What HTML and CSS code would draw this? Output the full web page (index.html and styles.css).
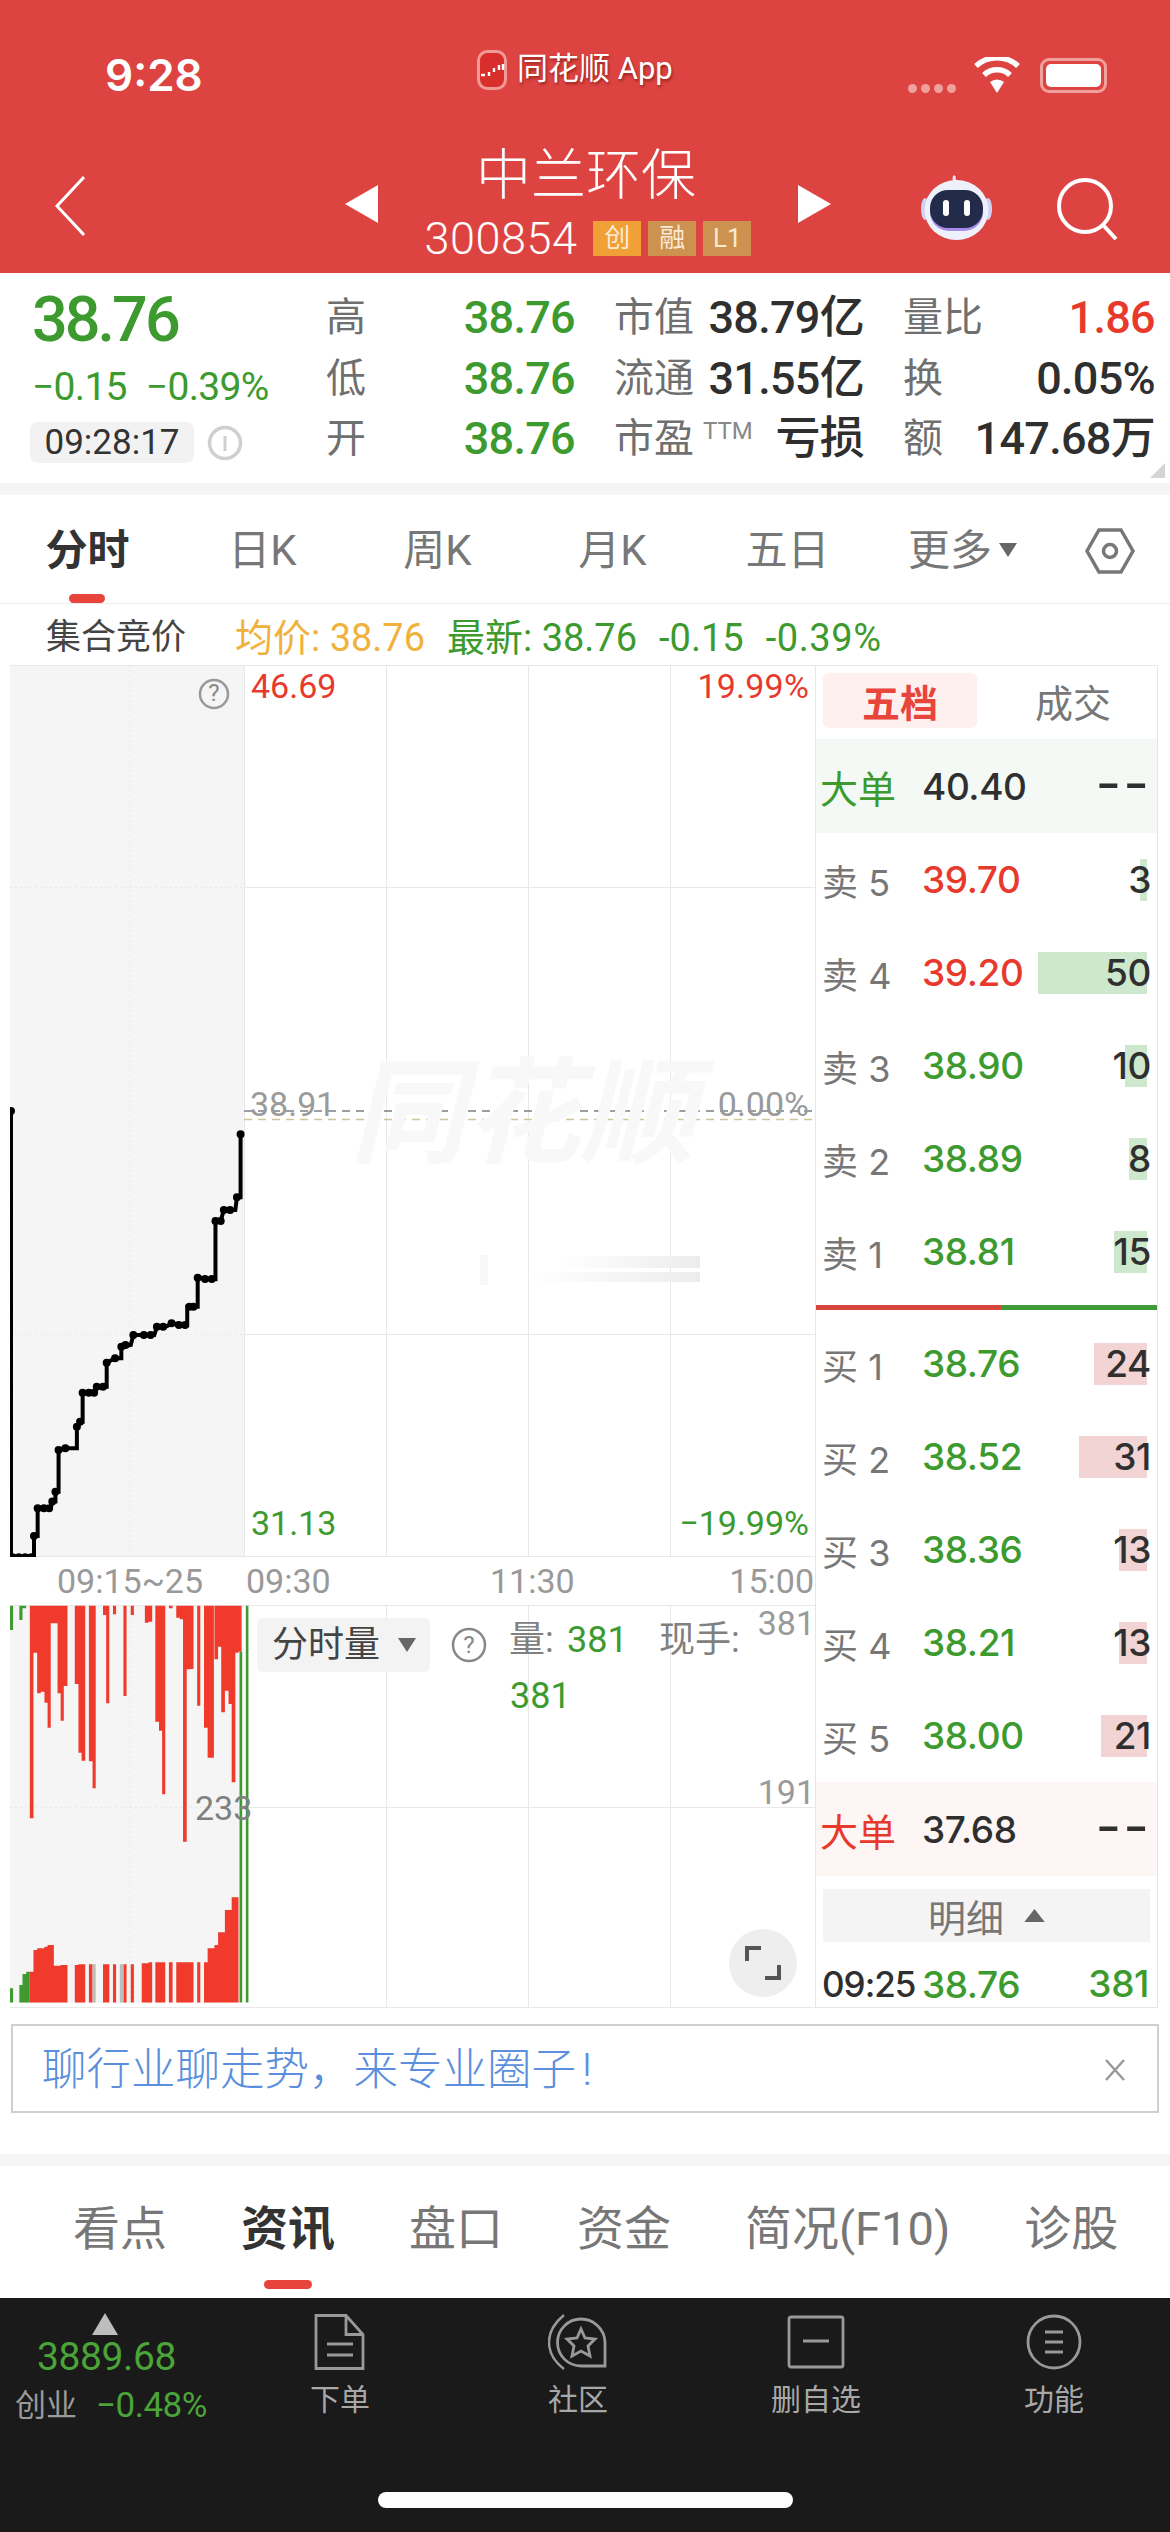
FILE: index.html
```html
<!DOCTYPE html>
<html lang="zh-CN">
<head>
<meta charset="utf-8">
<title>中兰环保</title>
<link rel="stylesheet" href="styles.css">
</head>
<body>
<div class="page">
  <header class="head">
    <div class="status">
      <span class="clock">9:28</span>
      <div class="appname">
        <svg class="applogo" viewBox="0 0 30 40"><rect x="1.5" y="1.5" width="27" height="37" rx="9" fill="#d92f2c" stroke="#f09a96" stroke-width="3"/><path d="M4 25h4M12 22v4M17 18v4M22 15v5M26 14v6" stroke="#fff" stroke-width="2.4"/></svg>
        <span>同花顺 App</span>
      </div>
      <div class="sysicons">
        <div class="dots"><i></i><i></i><i></i><i></i></div>
        <svg class="wifi" viewBox="0 0 48 36"><path d="M24 36l-7-11a11 11 0 0 1 14 0z" fill="#fff"/><path d="M11 18a19 19 0 0 1 26 0M3 9a31 31 0 0 1 42 0" fill="none" stroke="#fff" stroke-width="5.5"/></svg>
        <div class="battery"><div class="battery-fill"></div></div>
      </div>
    </div>
    <div class="nav">
      <svg class="back" viewBox="0 0 30 60"><path d="M29 1L2 30l27 29" fill="none" stroke="#fff" stroke-width="3"/></svg>
      <svg class="tri" viewBox="0 0 33 38"><path d="M33 0v38L0 19z" fill="#fff"/></svg>
      <div class="title">
        <div class="name">中兰环保</div>
        <div class="code"><span>300854</span><b class="tag tag-a">创</b><b class="tag">融</b><b class="tag">L1</b></div>
      </div>
      <svg class="tri" viewBox="0 0 33 38"><path d="M0 0v38l33-19z" fill="#fff"/></svg>
      <svg class="robot" viewBox="0 0 73 68">
        <path d="M36 9c-2-2-3-4-1-6" fill="none" stroke="#e9e6f8" stroke-width="3"/>
        <ellipse cx="5" cy="36" rx="4" ry="11" fill="#cfd3f2"/><ellipse cx="68" cy="36" rx="4" ry="11" fill="#cfd3f2"/>
        <ellipse cx="36.500" cy="37" rx="32" ry="30" fill="#eef0fb"/>
        <rect x="10" y="18" width="53" height="40" rx="19" fill="#a78be8"/>
        <rect x="10" y="17" width="53" height="38" rx="18" fill="#222b4a"/>
        <rect x="23" y="27" width="6" height="16" rx="3" fill="#fff"/><rect x="44" y="27" width="6" height="16" rx="3" fill="#fff"/>
      </svg>
      <svg class="search" viewBox="0 0 62 62"><circle cx="29" cy="28" r="26" fill="none" stroke="#fff" stroke-width="4"/><path d="M48 48l12 13" stroke="#fff" stroke-width="4"/></svg>
    </div>
  </header>

  <section class="quote">
    <div class="price-col">
      <div class="price">38.76</div>
      <div class="change"><span>−0.15</span><span>−0.39%</span></div>
      <div class="timerow">
        <span class="time">09:28:17</span>
        <svg class="info" viewBox="0 0 36 36"><circle cx="18" cy="18" r="15.500" fill="none" stroke="#cfcfcf" stroke-width="3.500"/><path d="M18 11v15" stroke="#cfcfcf" stroke-width="3"/></svg>
      </div>
    </div>
    <div class="stats">
      <div class="stat"><span class="lab">高</span><span class="val up-g">38.76</span></div>
      <div class="stat"><span class="lab">市值</span><span class="val dark">38.79亿</span></div>
      <div class="stat"><span class="lab">量比</span><span class="val red">1.86</span></div>
      <div class="stat"><span class="lab">低</span><span class="val up-g">38.76</span></div>
      <div class="stat"><span class="lab">流通</span><span class="val dark">31.55亿</span></div>
      <div class="stat"><span class="lab">换</span><span class="val dark">0.05%</span></div>
      <div class="stat"><span class="lab">开</span><span class="val up-g">38.76</span></div>
      <div class="stat"><span class="lab">市盈<small>TTM</small></span><span class="val dark">亏损</span></div>
      <div class="stat"><span class="lab">额</span><span class="val dark">147.68万</span></div>
    </div>
    <svg class="corner" viewBox="0 0 15 15"><path d="M15 0v15H0z" fill="#d4d4d4"/></svg>
  </section>
  <div class="band"></div>

  <nav class="tabs">
    <a class="tab on">分时</a><a class="tab">日K</a><a class="tab">周K</a><a class="tab">月K</a><a class="tab">五日</a>
    <a class="tab">更多<svg class="caret" viewBox="0 0 18 14"><path d="M0 0h18L9 14z" fill="#666"/></svg></a>
    <a class="tab"><svg class="hex" viewBox="0 0 50 46"><path d="M14 2h22l12 21-12 21H14L2 23z" fill="none" stroke="#777" stroke-width="3.500"/><circle cx="25" cy="23" r="6.500" fill="none" stroke="#777" stroke-width="3.500"/></svg></a>
  </nav>

  <div class="inforow">
    <span class="auction">集合竞价</span>
    <span class="avg">均价: 38.76</span>
    <span class="latest">最新: 38.76</span>
    <span class="latest">-0.15</span>
    <span class="latest">-0.39%</span>
  </div>

  <section class="market">
    <div class="chart">
      <div class="plot plot-price">
        <svg class="canvas" viewBox="10 665 805 892">
          <rect x="10" y="665" width="234" height="892" fill="#f5f5f5"/>
          <path d="M10 665.500H815M244 887.500H815M244 1334.500H815M10 1556.500H815M386.500 665V1557M528.500 665V1557M670.500 665V1557M244.500 665V1557" stroke="#e8e8e8" fill="none"/>
          <path d="M10 887.500H244M10 1334.500H244M129.500 665V1557" stroke="#e8e8e8" stroke-dasharray="2 3" fill="none"/>
          <path d="M244 1111H815" stroke="#7b7f86" stroke-width="1.500" stroke-dasharray="8 6"/>
          <path d="M244 1119.500H815" stroke="#cfc597" stroke-width="1.500" stroke-dasharray="8 6"/>
          <defs><linearGradient id="smear"><stop offset="0" stop-color="#fff"/><stop offset="1" stop-color="#ececec"/></linearGradient></defs>
          <rect x="560" y="1256" width="140" height="12" fill="url(#smear)"/>
          <rect x="530" y="1272" width="170" height="10" fill="url(#smear)"/>
          <rect x="480" y="1255" width="8" height="30" fill="#f8f8f8"/>
          <g transform="translate(0 1080) scale(.523 .3333)">
            <path class="line" d="M21 93V1432H65V1368H72V1285H97L100 1265H106V1235H112V1110L125 1105H147V1040L153 1025H158V938H180L185 920H204V848L220 835H232V800L250 795L255 765H295L300 740L320 738L328 730L358 735V680H378V593L412 597V423H422L428 390H450L453 352H460V163"/>
            <path class="dot" d="M21 93h0M24 1432h0M36 1432h0M48 1432h0M60 1432h0M65 1368h0M72 1285h0M84 1285h0M94 1285h0M100 1265h0M106 1235h0M112 1110h0M125 1105h0M147 1040h0M153 1025h0M158 938h0M170 938h0M180 938h0M185 920h0M197 920h0M204 848h0M220 835h0M232 800h0M240 795h0M255 765h0M275 765h0M288 765h0M300 740h0M312 740h0M328 730h0M342 735h0M354 735h0M362 680h0M370 680h0M378 593h0M392 597h0M405 597h0M412 423h0M422 423h0M428 390h0M440 390h0M453 352h0M460 163h0"/>
          </g>
        </svg>
        <span class="wm">同花顺</span>
        <svg class="help help-a" viewBox="0 0 32 32"><circle cx="16" cy="16" r="14" fill="none" stroke="#999" stroke-width="2.500"/><text x="16" y="23" text-anchor="middle" class="qm">?</text></svg>
        <span class="lbl l-top red">46.69</span>
        <span class="lbl r-top red">19.99%</span>
        <span class="lbl l-mid gray">38.91</span>
        <span class="lbl r-mid gray">0.00%</span>
        <span class="lbl l-bot up-g">31.13</span>
        <span class="lbl r-bot up-g">−19.99%</span>
      </div>
      <div class="axis">
        <span class="ax-a">09:15~25</span><span class="ax-b">09:30</span><span class="ax-c">11:30</span><span class="ax-d">15:00</span>
      </div>
      <div class="plot plot-vol">
        <svg class="canvas" viewBox="10 1605 805 403">
          <rect x="10" y="1606" width="234" height="397" fill="#f5f5f5"/>
          <path d="M10 1605.500H815M244 1807.500H815M10 2007.500H815M386.500 1605V2008M528.500 1605V2008M670.500 1605V2008" stroke="#e8e8e8" fill="none"/>
          <path d="M10 1807.500H244M129.500 1606V2003" stroke="#e8e8e8" stroke-dasharray="2 3" fill="none"/>
          <g transform="translate(0 1570) scale(.523 .3333)">
            <path fill="#ef3a2c" d="M57 107h7V745h-7zM64 107h7V248h-7zM71 107h7V370h-7zM78 107h7V365h-7zM85 107h6V398h-6zM91 107h6V473h-6zM97 107h7V160h-7zM104 107h6V160h-6zM110 107h6V370h-6zM116 107h6V452h-6zM122 107h7V348h-7zM143 107h7V342h-7zM150 107h6V548h-6zM156 107h7V572h-7zM170 107h7V574h-7zM177 107h6V655h-6zM197 107h6V135h-6zM203 107h6V400h-6zM216 107h6V133h-6zM236 107h6V378h-6zM250 107h6V135h-6zM277 107h7V158h-7zM284 107h7V155h-7zM297 107h7V455h-7zM304 107h6V482h-6zM310 107h6V673h-6zM323 107h7V115h-7zM337 107h7V143h-7zM344 107h6V148h-6zM350 107h7V815h-7zM357 107h7V298h-7zM364 107h6V297h-6zM377 107h6V407h-6zM390 107h7V473h-7zM397 107h6V563h-6zM403 107h6V563h-6zM410 107h7V268h-7zM417 107h6V230h-6zM423 107h7V427h-7zM430 107h7V362h-7zM437 107h6V402h-6zM443 107h7V637h-7zM450 107h6V248h-6zM456 107h6V245h-6z"/>
            <path fill="#ef3a2c" d="M57 1205h7V1298h-7zM64 1140h7V1298h-7zM71 1135h7V1298h-7zM78 1135h7V1298h-7zM85 1130h6V1298h-6zM91 1125h12V1298h-12zM103 1187h7V1298h-7zM110 1187h6V1298h-6zM116 1185h6V1298h-6zM122 1185h7V1298h-7zM143 1185h7V1298h-7zM150 1183h13V1298h-13zM170 1183h7V1298h-7zM197 1183h12V1298h-12zM216 1183h6V1298h-6zM236 1183h6V1298h-6zM250 1183h6V1298h-6zM271 1180h13V1298h-13zM284 1177h7V1298h-7zM297 1177h19V1298h-19zM323 1177h7V1298h-7zM337 1177h33V1298h-33zM377 1177h6V1298h-6zM390 1177h7V1298h-7zM397 1135h13V1298h-13zM410 1125h7V1298h-7zM417 1087h13V1298h-13zM430 1020h13V1298h-13zM443 982h13V1298h-13z"/>
            <path fill="#bdbdbd" d="M177 1183h6V1298h-6zM229 1183h7V1298h-7z"/>
            <path fill="#3f9b2f" d="M19 107h6V180h-6zM37 107h6V150h-6zM43 107h7V115h-7zM19 1255h6V1298h-6zM37 1245h6V1298h-6zM43 1212h7V1298h-7zM50 1205h7V1298h-7zM458 245h5V1298h-5zM470 107h5V1298h-5z"/>
          </g>
        </svg>
        <div class="vol-chip">分时量<svg class="chip-caret" viewBox="0 0 18 14"><path d="M0 0h18L9 14z" fill="#666"/></svg></div>
        <svg class="help help-b" viewBox="0 0 36 36"><circle cx="18" cy="18" r="16" fill="none" stroke="#888" stroke-width="2.500"/><text x="18" y="26" text-anchor="middle" class="qm">?</text></svg>
        <span class="lbl v-a gray2">量:</span>
        <span class="lbl v-b up-g">381</span>
        <span class="lbl v-c gray2">现手:</span>
        <span class="lbl v-d gray">381</span>
        <span class="lbl v-e up-g">381</span>
        <span class="lbl v-f gray">191</span>
        <span class="lbl v-g gray2">233</span>
        <div class="expand"><svg viewBox="0 0 36 36"><path d="M2 16V3h14M34 20v13H20" fill="none" stroke="#555" stroke-width="4"/></svg></div>
      </div>
    </div>

    <div class="book">
      <div class="book-tabs"><span class="bt on">五档</span><span class="bt">成交</span></div>
      <div class="big big-g"><span class="biglab up-g">大单</span><span class="px dark">40.40</span><span class="qty"><span class="nil">--</span></span></div>
      <div class="row"><span class="rl">卖 5</span><span class="px red">39.70</span><span class="qty"><i class="bar bar-g" style="width:7px"></i><span>3</span></span></div>
      <div class="row"><span class="rl">卖 4</span><span class="px red">39.20</span><span class="qty"><i class="bar bar-g" style="width:109px"></i><span>50</span></span></div>
      <div class="row"><span class="rl">卖 3</span><span class="px up-g">38.90</span><span class="qty"><i class="bar bar-g" style="width:22px"></i><span>10</span></span></div>
      <div class="row"><span class="rl">卖 2</span><span class="px up-g">38.89</span><span class="qty"><i class="bar bar-g" style="width:18px"></i><span>8</span></span></div>
      <div class="row"><span class="rl">卖 1</span><span class="px up-g">38.81</span><span class="qty"><i class="bar bar-g" style="width:33px"></i><span>15</span></span></div>
      <div class="split"><i class="s-r"></i><i class="s-g"></i></div>
      <div class="row"><span class="rl">买 1</span><span class="px up-g">38.76</span><span class="qty"><i class="bar bar-r" style="width:53px"></i><span>24</span></span></div>
      <div class="row"><span class="rl">买 2</span><span class="px up-g">38.52</span><span class="qty"><i class="bar bar-r" style="width:68px"></i><span>31</span></span></div>
      <div class="row"><span class="rl">买 3</span><span class="px up-g">38.36</span><span class="qty"><i class="bar bar-r" style="width:28px"></i><span>13</span></span></div>
      <div class="row"><span class="rl">买 4</span><span class="px up-g">38.21</span><span class="qty"><i class="bar bar-r" style="width:28px"></i><span>13</span></span></div>
      <div class="row"><span class="rl">买 5</span><span class="px up-g">38.00</span><span class="qty"><i class="bar bar-r" style="width:46px"></i><span>21</span></span></div>
      <div class="big big-r"><span class="biglab red">大单</span><span class="px dark">37.68</span><span class="qty"><span class="nil">--</span></span></div>
      <div class="detail">明细<svg class="up" viewBox="0 0 22 14"><path d="M0 14h22L11 0z" fill="#666"/></svg></div>
      <div class="last"><span class="lt dark">09:25</span><span class="px up-g">38.76</span><span class="qty up-g"><span>381</span></span></div>
    </div>
  </section>

  <div class="banner">
    <span>聊行业聊走势，来专业圈子<span class="bang">!</span></span>
    <svg class="close" viewBox="0 0 22 22"><path d="M2 1l18 20M20 1L2 21" stroke="#999" stroke-width="2.500"/></svg>
  </div>
  <div class="band band-2"></div>

  <nav class="tabs2">
    <a class="t2">看点</a><a class="t2 on">资讯</a><a class="t2">盘口</a><a class="t2">资金</a><a class="t2">简况(F10)</a><a class="t2">诊股</a>
  </nav>

  <footer class="dock">
    <div class="dock-row">
      <div class="index">
        <svg class="idx-tri" viewBox="0 0 26 22"><path d="M13 0l13 22H0z" fill="#bdbdbd"/></svg>
        <div class="idx-num">3889.68</div>
        <div class="idx-sub"><span class="idx-name">创业</span><span class="idx-pct">−0.48%</span></div>
      </div>
      <div class="dk">
        <svg viewBox="0 0 60 56"><path d="M6 1.500h30l17 19V54.500H6z M36 1.500V20.500H53" fill="none" stroke="#999" stroke-width="2.800"/><path d="M17 30h26M17 41h26" stroke="#999" stroke-width="3"/></svg>
        <span>下单</span>
      </div>
      <div class="dk">
        <svg viewBox="0 0 60 56"><path d="M16 1C4 11 1 20 1 28c0 9 3 18 15 27" fill="none" stroke="#999" stroke-width="2.500"/><path d="M33 5a23 23 0 1 0 0 47h24V28A24 24 0 0 0 33 5z" fill="none" stroke="#999" stroke-width="2.800"/><path d="M33 15l4 9 10 1-7 7 2 10-9-5-9 5 2-10-7-7 10-1z" fill="none" stroke="#999" stroke-width="2.800"/></svg>
        <span>社区</span>
      </div>
      <div class="dk">
        <svg viewBox="0 0 60 56"><rect x="3" y="3" width="54" height="50" rx="2" fill="none" stroke="#999" stroke-width="2.800"/><path d="M17 27h26" stroke="#999" stroke-width="3"/></svg>
        <span>删自选</span>
      </div>
      <div class="dk">
        <svg viewBox="0 0 60 56"><circle cx="30" cy="28" r="26" fill="none" stroke="#999" stroke-width="2.800"/><path d="M21 18h18M21 28h18M21 38h18" stroke="#999" stroke-width="3"/></svg>
        <span>功能</span>
      </div>
    </div>
    <div class="home"></div>
  </footer>
</div>
</body>
</html>
```
FILE: styles.css
```css
* { box-sizing: border-box; }
html, body { margin: 0; padding: 0; background: #fff; }
body { font-family: Roboto, "Noto Sans CJK SC", sans-serif; color: #333; }
.page { width: 1170px; height: 2532px; overflow: hidden; }
svg { display: block; }
a { display: block; }

.up-g { color: #3c9a2e; }
.red { color: #e8392d; }
.dark { color: #2f2f2f; }
.gray { color: #9a9a9a; }
.gray2 { color: #808080; }

/* Header */
.head { height: 273px; background: #dd4441; color: #fff; }
.status { height: 130px; display: flex; padding: 50px 0 0 105px; }
.clock { font-family: Inter, sans-serif; font-weight: 600; font-size: 44px; line-height: 50px; width: 372px; }
.appname { display: flex; align-items: flex-start; gap: 10px; width: 430px; }
.applogo { width: 30px; height: 40px; flex: none; }
.appname span { font-size: 31px; line-height: 38px; text-shadow: 1px 2px 3px rgba(90, 0, 0, .55); }
.sysicons { display: flex; align-items: flex-start; margin-left: 1px; }
.dots { display: flex; gap: 4px; margin: 34px 17px 0 0; }
.dots i { width: 9px; height: 9px; border-radius: 50%; background: #f0a09d; }
.wifi { width: 48px; height: 36px; margin: 7px 19px 0 0; }
.battery { width: 67px; height: 35px; margin-top: 8px; border: 3px solid #f0a09d; border-radius: 9px; padding: 3px; }
.battery-fill { width: 100%; height: 100%; background: #fff; border-radius: 5px; }

.nav { height: 143px; display: flex; align-items: flex-start; padding-left: 55px; }
.back { width: 30px; height: 60px; margin: 46px 260px 0 0; }
.tri { width: 33px; height: 38px; margin-top: 55px; flex: none; }
.title { width: 420px; text-align: center; }
.name { font-size: 55px; line-height: 70px; font-weight: 300; margin-top: 10px; margin-left: -4px; }
.code { display: flex; justify-content: center; align-items: center; gap: 7px; margin-top: 6px; height: 44px; }
.code span { font-size: 45px; font-weight: 300; margin-right: 9px; letter-spacing: .5px; }
.tag { width: 48px; height: 35px; background: #cd9150; color: #fbe9d2; font-weight: 400; font-size: 26px; line-height: 35px; text-align: center; }
.tag-a { background: #f0a036; }
.robot { width: 73px; height: 68px; margin: 43px 0 0 89px; }
.search { width: 62px; height: 62px; margin: 48px 0 0 63px; }

/* Quote */
.quote { height: 210px; display: flex; padding-top: 15px; position: relative; }
.price-col { width: 326px; padding-left: 32px; flex: none; }
.price { font-weight: 500; font-size: 63px; line-height: 60px; height: 60px; color: #3c9a2e; letter-spacing: -3px; margin-top: 2px; }
.change { display: flex; gap: 19px; font-size: 39px; line-height: 60px; margin-top: 7px; color: #3c9a2e; letter-spacing: -.7px; }
.timerow { display: flex; align-items: center; gap: 13px; margin-top: 5px; margin-left: -2px; }
.time { width: 164px; height: 41px; background: #f2f2f2; border-radius: 8px; text-align: center; font-size: 35px; line-height: 41px; color: #333; }
.info { width: 36px; height: 36px; }
.stats { display: grid; grid-template-columns: 249px 250px 252px; column-gap: 39px; grid-auto-rows: 60.5px; }
.stat { display: flex; justify-content: space-between; align-items: center; }
.lab { font-size: 40px; color: #6f6f6f; line-height: 50px; display: flex; }
.lab small { font-size: 24px; line-height: 34px; margin-left: 9px; color: #888; }
.val { font-size: 45px; font-weight: 500; line-height: 50px; letter-spacing: -.7px; }
.corner { position: absolute; right: 5px; bottom: 5px; width: 15px; height: 15px; }

.band { height: 12px; background: #f5f5f5; }

/* Tabs */
.tabs { height: 109px; display: grid; grid-template-columns: repeat(6, 175px) 120px; border-bottom: 1px solid #ececec; }
.tab { font-size: 42px; line-height: 50px; padding-top: 31px; color: #777; text-align: center; display: flex; justify-content: center; align-items: flex-start; position: relative; }
.tab.on { color: #333; font-weight: 700; }
.tab.on::after { content: ""; position: absolute; left: 69px; top: 99px; width: 36px; height: 9px; border-radius: 5px; background: #e8443c; }
.caret { width: 18px; height: 14px; margin: 17px 0 0 7px; }
.hex { width: 50px; height: 46px; margin-top: 2px; }

.inforow { height: 61px; display: flex; padding: 11px 0 0 46px; font-size: 38px; line-height: 46px; white-space: nowrap; }
.auction { width: 189px; color: #444; font-size: 35px; }
.avg { width: 212px; color: #f0b23c; }
.latest { color: #3c9a2e; margin-right: 22px; }
.latest:last-child { letter-spacing: .6px; }

/* Market */
.market { margin-left: 10px; width: 1148px; height: 1343px; display: flex; }
.chart { width: 805px; flex: none; }
.plot { position: relative; }
.plot-price { height: 892px; }
.plot-vol { height: 403px; }
.canvas { position: absolute; inset: 0; width: 100%; height: 100%; }
.line { fill: none; stroke: #000; stroke-width: 4; vector-effect: non-scaling-stroke; }
.dot { fill: none; stroke: #000; stroke-width: 8; stroke-linecap: round; vector-effect: non-scaling-stroke; }
.wm { position: absolute; left: 340px; top: 385px; font-size: 115px; line-height: 130px; font-weight: 700; color: #f8f8f8; font-style: italic; }
.lbl { position: absolute; font-size: 34px; line-height: 40px; white-space: nowrap; }
.help { position: absolute; }
.help-a { left: 188px; top: 13px; width: 32px; height: 32px; }
.help-b { left: 441px; top: 22px; width: 36px; height: 36px; }
.qm { font-size: 24px; fill: #888; font-family: Roboto, sans-serif; }
.l-top { left: 241px; top: 1px; }
.r-top { right: 6px; top: 1px; letter-spacing: .2px; }
.l-mid { left: 240px; top: 419px; }
.r-mid { right: 6px; top: 419px; }
.l-bot { left: 241px; top: 838px; }
.r-bot { right: 6px; top: 838px; }

.axis { height: 48px; position: relative; font-size: 34px; line-height: 48px; color: #999; }
.axis span { position: absolute; top: 0; }
.ax-a { left: 47px; }
.ax-b { left: 236px; }
.ax-c { left: 480px; }
.ax-d { right: 1px; }

.vol-chip { position: absolute; left: 247px; top: 13px; width: 173px; height: 54px; background: #f3f3f3; border-radius: 6px; font-size: 36px; line-height: 54px; padding-left: 15px; color: #444; display: flex; align-items: center; }
.chip-caret { width: 18px; height: 14px; margin-left: 18px; }
.v-a { left: 499px; top: 15px; font-size: 36px; }
.v-b { left: 557px; top: 15px; font-size: 36px; }
.v-c { left: 649px; top: 15px; font-size: 36px; }
.v-d { right: 0; top: -2px; }
.v-e { left: 500px; top: 71px; font-size: 36px; }
.v-f { right: 0; top: 167px; }
.v-g { left: 185px; top: 183px; }
.expand { position: absolute; left: 719px; top: 324px; width: 68px; height: 68px; border-radius: 50%; background: #eee; display: flex; align-items: center; justify-content: center; }
.expand svg { width: 36px; height: 36px; }

/* Order book */
.book { width: 343px; flex: none; border-left: 1px solid #e6e6e6; border-right: 1px solid #e6e6e6; border-bottom: 1px solid #e6e6e6; border-top: 1px solid #e9e9e9; font-family: Inter, "Noto Sans CJK SC", sans-serif; }
.book-tabs { height: 73px; display: flex; padding: 7px 0 0 7px; }
.bt { width: 154px; height: 55px; font-size: 38px; line-height: 55px; text-align: center; color: #777; font-family: "Noto Sans CJK SC", sans-serif; }
.bt + .bt { margin-left: 19px; }
.bt.on { background: #fdf0ee; color: #e8453c; border-radius: 6px; font-weight: 700; }
.big, .row, .last { display: flex; align-items: center; padding: 0 6px 0 6px; }
.big { height: 94px; }
.big-g { background: #f4f9f5; }
.big-r { background: #fdf6f5; height: 94px; }
.biglab { width: 102px; font-size: 38px; margin-left: -2px; font-family: "Noto Sans CJK SC", sans-serif; }
.row { height: 93px; }
.rl { width: 100px; font-size: 36px; color: #777; }
.px { font-size: 37px; font-weight: 500; width: 130px; letter-spacing: -.4px; }
.qty { flex: 1; text-align: right; position: relative; font-size: 37px; font-weight: 500; color: #2f2f2f; line-height: 42px; letter-spacing: -.4px; }
.qty span { position: relative; }
.qty .nil { font-size: 56px; letter-spacing: 2px; font-weight: 400; }
.bar { position: absolute; right: 4px; top: 0; height: 42px; }
.bar-g { background: #cde8cc; }
.bar-r { background: #f2d4d4; }
.split { height: 5px; margin: 7px 0; display: flex; }
.s-r { width: 185px; background: #d8453f; }
.s-g { flex: 1; background: #3f9b36; }
.detail { height: 53px; margin: 13px 7px 0 7px; background: #f4f4f4; display: flex; align-items: center; justify-content: center; gap: 20px; font-size: 38px; color: #777; font-family: "Noto Sans CJK SC", sans-serif; }
.up { width: 21px; height: 13px; }
.last { height: 64px; padding: 20px 8px 0 6px; }
.lt { width: 100px; font-size: 35px; font-weight: 500; letter-spacing: -1px; }
.last .qty { color: #3c9a2e; }

/* Banner */
.banner { margin: 16px 0 0 11px; width: 1148px; height: 89px; border: 2px solid #cfcfcf; display: flex; align-items: center; justify-content: space-between; padding: 2px 31px 0 29px; font-size: 44.500px; line-height: 50px; color: #5b8fdd; font-weight: 300; }
.bang { margin-left: 6px; }
.close { width: 22px; height: 22px; }
.band-2 { margin-top: 41px; }

.tabs2 { height: 132px; display: flex; gap: 74px; padding: 33px 0 0 73px; }
.t2 { font-size: 47px; line-height: 60px; color: #777; position: relative; white-space: nowrap; }
.t2.on { color: #333; font-weight: 700; }
.t2.on::after { content: ""; position: absolute; left: 23px; top: 81px; width: 48px; height: 9px; border-radius: 5px; background: #e8443c; }

/* Dock */
.dock { height: 234px; background: #1a1a1a; position: relative; }
.dock-row { display: grid; grid-template-columns: 221px repeat(4, 238px); }
.index { height: 140px; position: relative; }
.idx-tri { width: 26px; height: 22px; position: absolute; left: 92px; top: 15px; }
.idx-num { position: absolute; left: 37px; top: 36px; font-size: 39px; line-height: 46px; color: #4aa437; letter-spacing: -.4px; }
.idx-sub { position: absolute; left: 15px; top: 86px; display: flex; align-items: center; gap: 19px; }
.idx-name { font-size: 31px; line-height: 44px; color: #9a9a9a; }
.idx-pct { font-size: 35px; line-height: 44px; color: #4aa437; letter-spacing: -.5px; }
.dk { display: flex; flex-direction: column; align-items: center; padding-top: 16px; color: #a8a8a8; font-size: 30px; line-height: 40px; }
.dk svg { width: 60px; height: 56px; margin-bottom: 10px; }
.home { position: absolute; left: 378px; top: 194px; width: 415px; height: 16px; border-radius: 8px; background: #fff; }
```
